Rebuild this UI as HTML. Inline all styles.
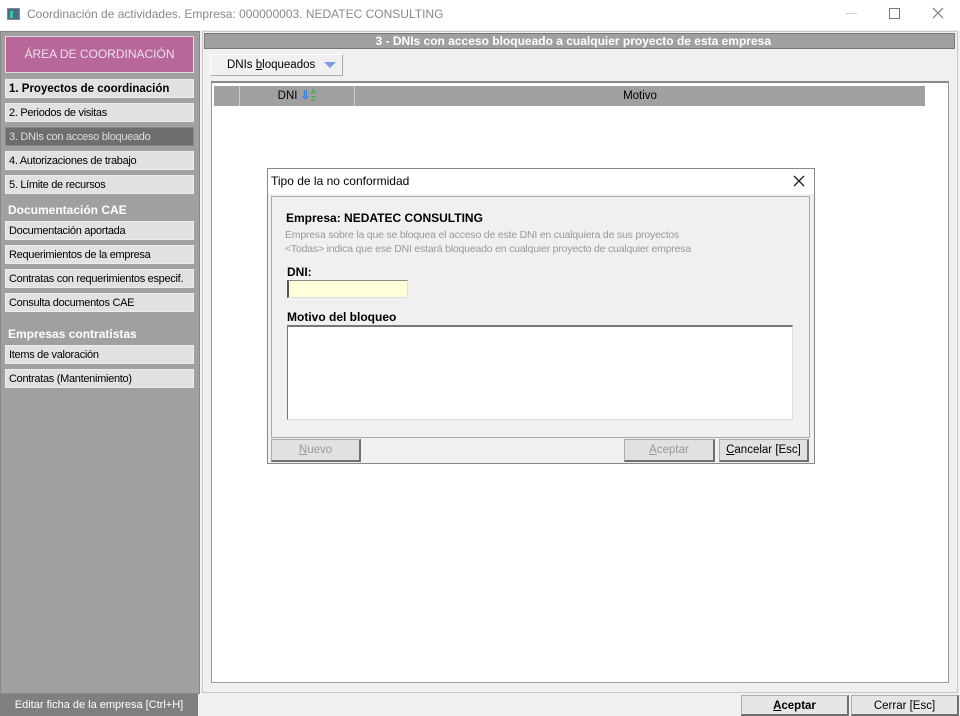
<!DOCTYPE html>
<html><head><meta charset="utf-8"><style>
*{box-sizing:border-box;margin:0;padding:0}
body{width:960px;height:716px;position:relative;background:#f0f0f0;font-family:"Liberation Sans",sans-serif;font-size:12px;color:#000;overflow:hidden}
.a{position:absolute;white-space:nowrap}
.item{position:absolute;left:5px;width:189px;height:19px;background:#e1e1e1;border:1px solid #ececec;font-size:11px;line-height:18px;padding-left:3px;letter-spacing:-0.3px;white-space:nowrap;overflow:hidden}
.hd{position:absolute;left:8px;color:#fff;font-weight:bold;font-size:12px}
.btn{position:absolute;background:#e1e1e1;border:1px solid #adadad;border-right:2px solid #707070;border-bottom:2px solid #707070;text-align:center;font-size:11.5px;line-height:20px;white-space:nowrap}
</style></head><body>
<div class="a" style="left:0;top:0;width:960px;height:30px;background:#fff"></div>
<div class="a" style="left:7px;top:8px;width:13px;height:12px;background:#4a6b8a;border:1px solid #888"><div class="a" style="left:2px;top:2px;width:3px;height:7px;background:#3c9"></div></div>
<div class="a" style="left:27px;top:7px;color:#888;font-size:12px">Coordinación de actividades. Empresa: 000000003. NEDATEC CONSULTING</div>
<div class="a" style="left:846px;top:13px;width:11px;height:1px;background:#ccc"></div>
<div class="a" style="left:889px;top:8px;width:11px;height:11px;border:1px solid #777"></div>
<svg class="a" style="left:932px;top:7px" width="12" height="12"><path d="M1 1L11 11M11 1L1 11" stroke="#777" stroke-width="1.2"/></svg>

<div class="a" style="left:0;top:31px;width:200px;height:663px;background:#a0a0a0;border:1px solid #888"></div>
<div class="a" style="left:5px;top:36px;width:189px;height:37px;background:#b8679a;border:1px solid #ddd;color:#f0e0ea;text-align:center;line-height:35px;font-size:12px">ÁREA DE COORDINACIÓN</div>
<div class="item" style="top:79px;font-weight:bold;font-size:11.5px;letter-spacing:0">1. Proyectos de coordinación</div>
<div class="item" style="top:103px">2. Periodos de visitas</div>
<div class="item" style="top:127px;background:#6e6e6e;color:#ddd;border-color:#888">3. DNIs con acceso bloqueado</div>
<div class="item" style="top:151px">4. Autorizaciones de trabajo</div>
<div class="item" style="top:175px">5. Límite de recursos</div>
<div class="hd" style="top:203px">Documentación CAE</div>
<div class="item" style="top:221px">Documentación aportada</div>
<div class="item" style="top:245px">Requerimientos de la empresa</div>
<div class="item" style="top:269px">Contratas con requerimientos especif.</div>
<div class="item" style="top:293px">Consulta documentos CAE</div>
<div class="hd" style="top:327px">Empresas contratistas</div>
<div class="item" style="top:345px">Items de valoración</div>
<div class="item" style="top:369px">Contratas (Mantenimiento)</div>

<div class="a" style="left:202px;top:31px;width:756px;height:662px;border:1px solid #c8c8c8"></div>
<div class="a" style="left:204px;top:33px;width:751px;height:16px;background:#a0a0a0;border:1px solid #777;color:#fff;font-weight:bold;text-align:right;padding-right:183px;line-height:14px;font-size:12px">3 - DNIs con acceso bloqueado a cualquier proyecto de esta empresa</div>
<div class="a" style="left:210px;top:54px;width:133px;height:22px;background:#f0f0f0;border:1px solid #fff;border-right:1px solid #aaa;border-bottom:1px solid #aaa;line-height:20px;padding-left:16px;font-size:11.5px">DNIs <u>b</u>loqueados <span style="display:inline-block;margin-left:6px;width:0;height:0;border-left:6px solid transparent;border-right:6px solid transparent;border-top:6px solid #7d9be0;vertical-align:middle"></span></div>
<div class="a" style="left:211px;top:81px;width:738px;height:602px;background:#fff;border:1px solid #999;border-top:2px solid #888"></div>
<div class="a" style="left:214px;top:86px;width:711px;height:20px;background:#a0a0a0"></div>
<div class="a" style="left:239px;top:86px;width:116px;height:20px;border-left:1px solid #ccc;border-right:1px solid #ccc;text-align:center;line-height:20px;font-size:11.5px">DNI <span style="color:#2b7de0;font-weight:bold">⇩</span><span style="color:#2a2;font-size:7px;display:inline-block;width:6px;line-height:7px;vertical-align:middle;word-break:break-all;white-space:normal">AZ</span></div>
<div class="a" style="left:355px;top:86px;width:570px;height:20px;text-align:center;line-height:20px;font-size:11.5px">Motivo</div>

<div class="a" style="left:267px;top:168px;width:548px;height:296px;background:#f0f0f0;border:1px solid #888"></div>
<div class="a" style="left:268px;top:169px;width:546px;height:25px;background:#fff"></div>
<div class="a" style="left:271px;top:174px;font-size:12px">Tipo de la no conformidad</div>
<svg class="a" style="left:793px;top:175px" width="12" height="12"><path d="M1 1L11 11M11 1L1 11" stroke="#222" stroke-width="1.3"/></svg>
<div class="a" style="left:271px;top:196px;width:539px;height:242px;border:1px solid #aaa;background:#f0f0f0"></div>
<div class="a" style="left:286px;top:211px;font-weight:bold;font-size:12px">Empresa: NEDATEC CONSULTING</div>
<div class="a" style="left:285px;top:228px;color:#999;font-size:10.5px;line-height:14px;letter-spacing:-0.2px">Empresa sobre la que se bloquea el acceso de este DNI en cualquiera de sus proyectos<br>&lt;Todas&gt; indica que ese DNI estará bloqueado en cualquier proyecto de cualquier empresa</div>
<div class="a" style="left:287px;top:265px;font-weight:bold">DNI:</div>
<div class="a" style="left:287px;top:280px;width:121px;height:18px;background:#ffffd8;border:1px solid #ddd;border-left:2px solid #555;border-top:1px solid #888"></div>
<div class="a" style="left:287px;top:310px;font-weight:bold">Motivo del bloqueo</div>
<div class="a" style="left:287px;top:325px;width:506px;height:95px;background:#fff;border:1px solid #ddd;border-left:1px solid #777;border-top:2px solid #777"></div>
<div class="btn" style="left:271px;top:439px;width:90px;height:23px;color:#999"><u>N</u>uevo</div>
<div class="btn" style="left:624px;top:439px;width:91px;height:23px;color:#999"><u>A</u>ceptar</div>
<div class="btn" style="left:719px;top:439px;width:90px;height:23px"><u>C</u>ancelar [Esc]</div>

<div class="a" style="left:0;top:694px;width:198px;height:22px;background:#7f7f7f;color:#fff;text-align:center;line-height:22px;font-size:11px">Editar ficha de la empresa [Ctrl+H]</div>
<div class="btn" style="left:741px;top:695px;width:108px;height:21px;background:#e6e6e6;font-weight:bold;line-height:20px"><u>A</u>ceptar</div>
<div class="btn" style="left:851px;top:695px;width:108px;height:21px;background:#e6e6e6;line-height:20px">Cerrar [Esc]</div>
</body></html>
